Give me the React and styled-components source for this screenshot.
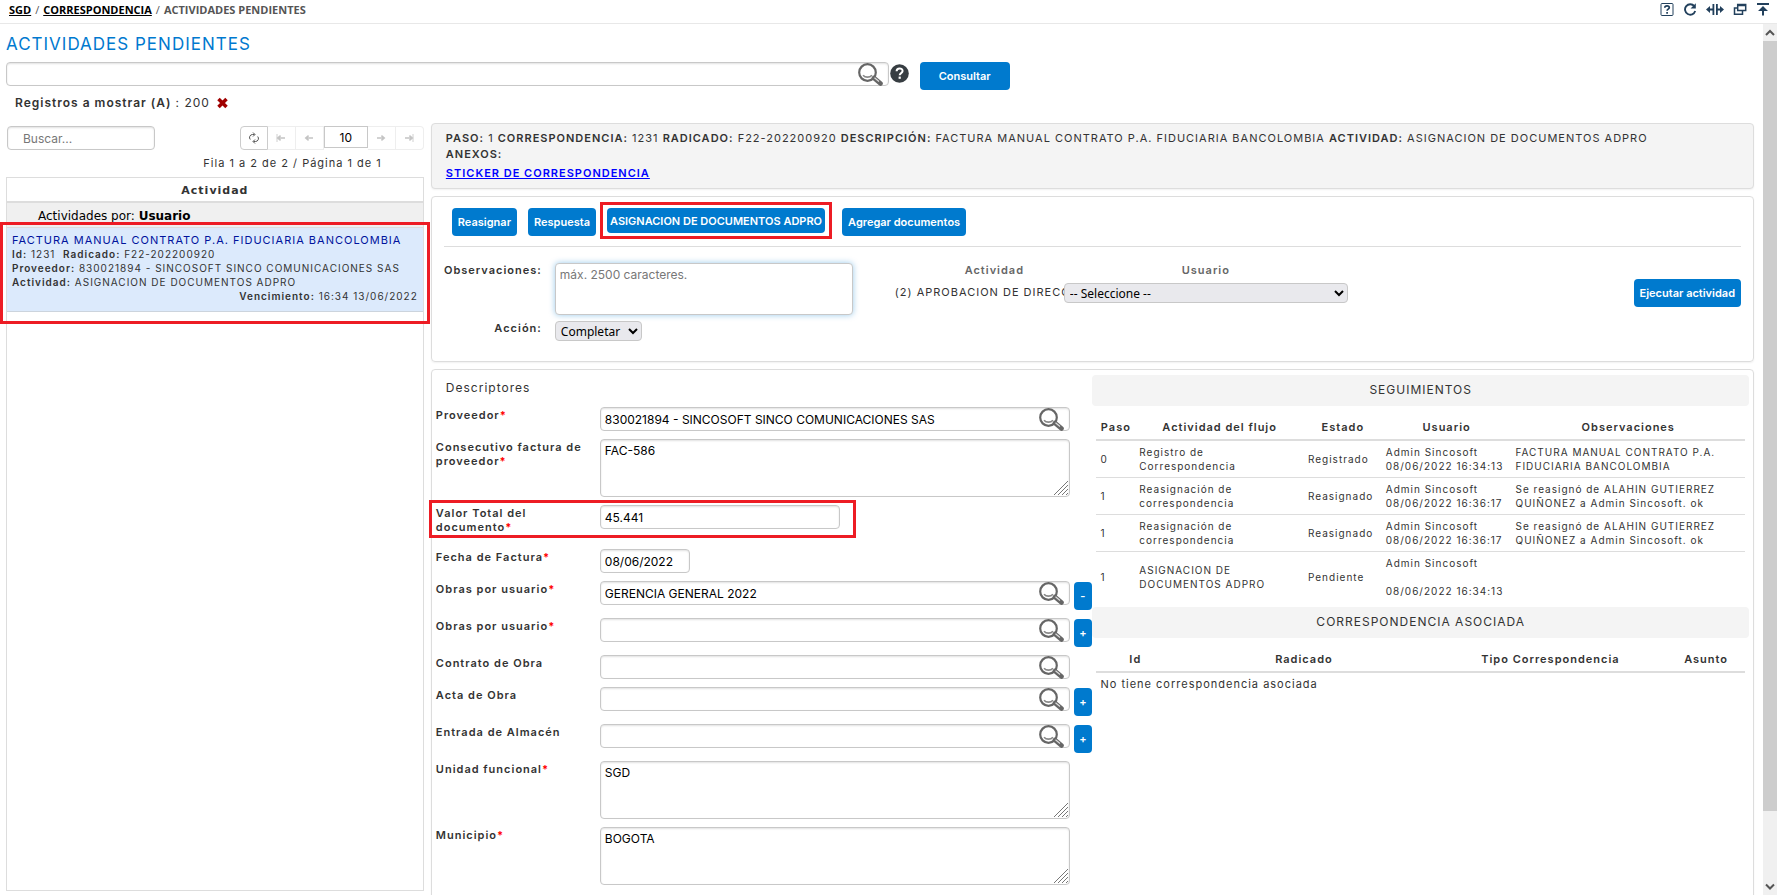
import React, { useState } from 'react';
import styled, { createGlobalStyle, css } from 'styled-components';

const GlobalStyle = createGlobalStyle`
  *, *::after {
    box-sizing: border-box;
  }
  body {
    margin: 0;
    background: #fff;
    color: #333;
    font-family: Inter, 'Liberation Sans', sans-serif;
    font-size: 11px;
    line-height: 14px;
  }
  input, textarea, button, select {
    font-family: inherit;
    margin: 0;
  }
  b, th, label {
    font-weight: 600;
  }
`;

const Page = styled.div`
  height: 100vh;
  display: flex;
  flex-direction: column;
  overflow: hidden;
`;

const TopBar = styled.header`
  height: 24px;
  flex: none;
  display: flex;
  justify-content: space-between;
  padding: 3px 7px 0 9px;
  border-bottom: 1px solid #e8e8e8;
`;

const Breadcrumb = styled.nav`
  font-family: 'Open Sans', 'Noto Sans', sans-serif;
  font-size: 11px;
  font-weight: 700;
  color: #555;

  a {
    color: #000;
  }
  span {
    font-weight: 400;
    padding: 0 4px;
  }
`;

const Tools = styled.div`
  display: flex;
  align-items: flex-start;
  gap: 9px;
`;

const IconButton = styled.button`
  display: flex;
  padding: 0;
  border: 0;
  background: none;
  color: #22405c;
`;

const Body = styled.div`
  flex: 1;
  min-height: 0;
  display: flex;
`;

const Main = styled.main`
  flex: 1;
  min-width: 0;
  overflow: hidden;
  padding: 9px 9px 0 6px;
`;

const ScrollBar = styled.div`
  width: 14px;
  flex: none;
  display: flex;
  flex-direction: column;
  justify-content: space-between;
  background: #f0f0f0;
`;

const ScrollButton = styled.button`
  height: 17px;
  padding: 0;
  border: 0;
  background: none;
  display: flex;
  align-items: center;
  justify-content: center;
`;

const ScrollTrack = styled.div`
  flex: 1;
`;

const ScrollThumb = styled.div`
  height: 92%;
  background: #cdcdcd;
`;

const Title = styled.h1`
  margin: 0 0 7px;
  font-size: 17px;
  line-height: 22px;
  font-weight: 400;
  letter-spacing: 1px;
  color: #0079cf;
`;

const SearchRow = styled.form`
  display: flex;
  align-items: flex-start;
  height: 31px;
`;

const field = css`
  border: 1px solid #c8c8c8;
  border-radius: 4px;
  background: #fff;
  box-shadow: inset 0 1px 2px rgba(0, 0, 0, 0.12);
  color: #000;
  font-size: 12px;
  line-height: 16px;
  padding: 3px 4px;

  &::placeholder {
    color: #777;
    opacity: 1;
  }
`;

const TextInput = styled.input`
  ${field}
  height: 24px;
  width: ${(p) => p.$width || '100%'};
`;

const ListSearch = styled(TextInput)`
  margin-left: 1px;
  padding-left: 15px;
`;

const TextArea = styled.textarea`
  ${field}
  display: block;
  width: 100%;
  height: 58px;
  resize: none;
`;

const SearchBox = styled.div`
  position: relative;
  width: ${(p) => p.$width || '100%'};
`;

const Lens = styled.button`
  position: absolute;
  top: 0;
  right: 5px;
  padding: 0;
  border: 0;
  background: none;
  display: flex;
`;

const HelpButton = styled(IconButton)`
  margin: 2px 11px 0 1px;
`;

const Button = styled.button`
  height: ${(p) => (p.$compact ? 25 : 28)}px;
  min-width: ${(p) => p.$width || 0}px;
  padding: 0 ${(p) => (p.$compact ? 3 : 6)}px;
  flex: none;
  border: 0;
  border-radius: 4px;
  background: #007ace;
  color: #fff;
  font-size: 11px;
  font-weight: 600;
  white-space: nowrap;
`;

const Filters = styled.div`
  display: flex;
  align-items: center;
  gap: 4px;
  height: 20px;
  padding-left: 9px;
  margin-bottom: 10px;
  font-size: 12px;
  letter-spacing: 1px;
`;

const Columns = styled.div`
  display: grid;
  grid-template-columns: minmax(0, 24fr) minmax(0, 76fr);
  gap: 7px;
`;

const ListSide = styled.section`
  padding-top: 3px;
`;

const ListTools = styled.div`
  display: flex;
  justify-content: space-between;
  align-items: flex-start;
`;

const Pager = styled.div`
  display: flex;
  align-items: flex-start;
`;

const PagerButton = styled.button`
  width: 28px;
  height: 24px;
  padding: 0;
  display: flex;
  align-items: center;
  justify-content: center;
  background: #fff;
  border: 1px solid ${(p) => (p.$on ? '#ccc' : '#eee')};
  border-left-width: ${(p) => (p.$on ? 1 : 0)}px;
  color: ${(p) => (p.$on ? '#555' : '#c4c4c4')};

  &:first-child {
    border-radius: 4px 0 0 4px;
  }
  &:last-child {
    border-radius: 0 4px 4px 0;
  }
`;

const PageSize = styled.input`
  width: 44px;
  height: 22px;
  border: 1px solid #c8c8c8;
  text-align: center;
  font-size: 12px;
  color: #000;
`;

const PageInfo = styled.div`
  padding: 6px 42px 7px 0;
  text-align: right;
  letter-spacing: 1px;
`;

const List = styled.div`
  height: 714px;
  border: 1px solid #ddd;
`;

const ListHeader = styled.div`
  padding: 6px 0 3px;
  border-bottom: 2px solid #ddd;
  text-align: center;
  font-family: 'DejaVu Sans', sans-serif;
  font-size: 11px;
  font-weight: 700;
  letter-spacing: 1px;
`;

const ListGroup = styled.div`
  padding: 6px 0 4px 31px;
  background: #f0f0f0;
  border-bottom: 1px solid #ddd;
  font-family: 'DejaVu Sans', sans-serif;
  font-size: 12px;
  color: #000;

  b {
    font-weight: 700;
  }
`;

const highlight = css`
  position: relative;

  &::after {
    content: '';
    position: absolute;
    border: 3px solid #ed1c24;
    pointer-events: none;
  }
`;

const ListItem = styled.article`
  ${highlight}
  height: 84px;
  padding: 5px 5px 0;
  background: #dceafc;
  border-bottom: 1px solid #ccd4dd;
  white-space: nowrap;

  &::after {
    inset: -6px -7px -13px -7px;
  }
  h2 {
    margin: 0;
    font-size: 11px;
    line-height: 14px;
    font-weight: 400;
    letter-spacing: 1px;
    color: #00139c;
  }
`;

const ItemLine = styled.div`
  font-size: 10px;
  text-align: ${(p) => (p.$due ? 'right' : 'left')};
  letter-spacing: 1px;
`;

const WorkSide = styled.section`
  display: flex;
  flex-direction: column;
  gap: 7px;
`;

const Panel = styled.section`
  border: 1px solid #ddd;
  border-radius: 4px;
  box-shadow: 0 1px 2px rgba(0, 0, 0, 0.06);
`;

const InfoPanel = styled(Panel)`
  height: 66px;
  padding: 6px 14px;
  background: #f4f4f4;
  line-height: 16px;
  letter-spacing: 1px;

  a {
    display: inline-block;
    margin-top: 3px;
    font-weight: 600;
    color: #00f;
  }
`;

const ActionPanel = styled(Panel)`
  height: 166px;
  padding: 11px 12px 0;
`;

const ActionButtons = styled.div`
  display: flex;
  gap: 11px;
  padding: 0 0 10px 8px;
  border-bottom: 1px solid #ddd;
`;

const Marked = styled.div`
  ${highlight}
  height: 25px;
  margin-right: 6px;

  &::after {
    inset: -6px -7px;
  }
`;

const ActionForm = styled.div`
  display: grid;
  grid-template-columns: 98px 311px 42px 169px 284px 1fr;
  padding-top: 16px;
`;

const ActionLabels = styled.div`
  display: flex;
  flex-direction: column;
  gap: 44px;
  text-align: right;
  letter-spacing: 1px;
`;

const ActionFields = styled.div`
  padding-left: 13px;
`;

const Notes = styled.textarea`
  ${field}
  display: block;
  width: 100%;
  height: 52px;
  margin-bottom: 6px;
  resize: none;
  box-shadow: 0 0 6px rgba(0, 122, 206, 0.4);
`;

const Select = styled.select`
  width: ${(p) => p.$width || '100%'};
  height: 20px;
  padding: 0 0 0 1px;
  border: 1px solid #c8c8c8;
  border-radius: 4px;
  background: #e9e9ed;
  color: #000;
  font-family: 'Noto Sans', sans-serif;
  font-size: 12px;
`;

const ActionHead = styled.div`
  height: 20px;
  padding-left: ${(p) => p.$shift || 0}px;
  text-align: center;
  font-weight: 600;
  letter-spacing: 1px;
  color: #666;
`;

const NextStep = styled.label`
  display: block;
  padding-top: 2px;
  overflow: hidden;
  white-space: nowrap;
  font-weight: 400;
  letter-spacing: 1px;
`;

const Run = styled.div`
  padding-top: 16px;
  text-align: right;
`;

const DetailPanel = styled(Panel)`
  display: grid;
  grid-template-columns: minmax(0, 1fr) minmax(0, 1fr);
  padding: 5px 4px 12px 4px;
`;

const SectionName = styled.h2`
  margin: 0;
  padding: 6px 0 12px 10px;
  font-size: 12px;
  line-height: 14px;
  font-weight: 400;
  letter-spacing: 1px;
`;

const FieldRow = styled.div`
  display: grid;
  grid-template-columns: 164px minmax(0, 470px) 22px;
  margin-bottom: 8px;
`;

const MarkedRow = styled(FieldRow)`
  ${highlight}
  min-height: 36px;

  &::after {
    inset: -5px auto 3px -7px;
    width: 427px;
  }
`;

const FieldLabel = styled.label`
  padding: 1px 14px 0 0;
  letter-spacing: 1px;

  &::after {
    content: ${(p) => (p.$required ? "'*'" : 'none')};
    color: #f00;
    font-weight: 700;
  }
`;

const RepeatButton = styled(Button)`
  justify-self: end;
  margin-top: 1px;
  width: 18px;
  padding: 0;
`;

const AreaBox = styled.div`
  position: relative;

  svg {
    position: absolute;
    right: 1px;
    bottom: 1px;
  }
`;

const SideHeading = styled.h2`
  margin: 0;
  height: 31px;
  border-radius: 4px;
  background: #f4f4f4;
  text-align: center;
  font-size: 12px;
  line-height: 30px;
  font-weight: 400;
  letter-spacing: 1px;
`;

const Table = styled.table`
  width: calc(100% - 8px);
  margin: 12px 4px ${(p) => p.$gap || 0}px;
  border-collapse: collapse;
  table-layout: fixed;
  letter-spacing: 1px;

  th {
    height: 22px;
    padding: 0 0 3px;
    border-bottom: 2px solid #ddd;
    font-size: 11px;
    white-space: nowrap;
  }
  td {
    padding: 4px 0 4px 4px;
    border-top: 1px solid #ddd;
    font-size: 10px;
    white-space: pre-line;
  }
  td[colspan] {
    font-size: 11px;
  }
`;

const LensIcon = () => (
  <svg width="28" height="24" viewBox="0 0 28 24" fill="none">
    <circle cx="11.5" cy="10.5" r="8.3" stroke="#666" strokeWidth="2.2" />
    <path d="M7 13.2c2.3 2.6 6.6 2.6 9 0" stroke="#888" strokeWidth="1.6" />
    <path d="M18 16l6.500 5.500" stroke="#666" strokeWidth="4.6" strokeLinecap="round" />
    <path d="M18.500 15.700l4.500 3.800" stroke="#ddd" strokeWidth="1.2" />
  </svg>
);

const HelpIcon = () => (
  <svg width="19" height="19" viewBox="0 0 19 19">
    <circle cx="9.5" cy="9.5" r="9.3" fill="#373d42" />
    <path d="M6.600 7.300c0-3.800 6-3.800 6-.3 0 2.200-2.900 2-2.900 4.200" fill="none" stroke="#fff" strokeWidth="2" />
    <rect x="8.6" y="12.600" width="2.200" height="2.200" fill="#fff" />
  </svg>
);

const Grip = () => (
  <svg width="16" height="16" viewBox="0 0 16 16" stroke="#777" strokeWidth="1">
    <path d="M1 15L15 1M5 15L15 5M9 15l6-6M13 15l2-2" />
  </svg>
);

const TOOL_ICONS = {
  Ayuda: (
    <svg width="14" height="13" viewBox="0 0 14 13" fill="none" stroke="currentColor">
      <rect x="1" y="0.5" width="12" height="12" rx="1" />
      <path d="M4.800 4.700c0-2.500 4.500-2.400 4.500-.1 0 1.500-2.200 1.500-2.200 3.100M7.100 9v1.700" strokeWidth="1.700" />
    </svg>
  ),
  Recargar: (
    <svg width="14" height="13" viewBox="0 0 14 13" fill="none" stroke="currentColor">
      <path d="M11.300 3.200A5.200 5.200 0 1 0 12.200 8" strokeWidth="1.900" />
      <path d="M12.800.3v5.200H7.600z" fill="currentColor" stroke="none" />
    </svg>
  ),
  Ajustar: (
    <svg width="18" height="13" viewBox="0 0 18 13" fill="currentColor">
      <path d="M6.500 1h1.800v11H6.500zM10 1h1.800v11H10zM0 6.500L4 3v2.500h2.500v2H4V10zM18 6.500L14 3v2.500h-2.200v2H14V10z" />
    </svg>
  ),
  Ventanas: (
    <svg width="14" height="13" viewBox="0 0 14 13" fill="none" stroke="currentColor" strokeWidth="1.500">
      <path d="M4.700 1.500h8v6h-8zM4.700 2.400h8M4.500 5H1.500v6.200h8V8" />
    </svg>
  ),
  Subir: (
    <svg width="14" height="13" viewBox="0 0 14 13" fill="currentColor">
      <path d="M1 0h12v2H1zM7 3l5 5H8v4.500H6V8H2z" />
    </svg>
  ),
};

const Arrow = ({ flip, bar }) => (
  <svg width="10" height="8" viewBox="0 0 12 10" fill="none" stroke="currentColor">
    <g transform={flip ? 'rotate(180 6 5)' : undefined}>
      <path d="M2 5h9M5.500 2L2 5l3.500 3" strokeWidth="2" />
      {bar && <path d="M1 0v10" />}
    </g>
  </svg>
);

const Chevron = ({ down }) => (
  <svg width="10" height="8" viewBox="0 0 10 8" fill="none" stroke="#555" strokeWidth="2">
    <path d={down ? 'M1 1.500l4 4 4-4' : 'M1 6l4-4 4 4'} />
  </svg>
);

const FIELDS = [
  { id: 'proveedor', label: 'Proveedor', required: true, type: 'search', value: '830021894 - SINCOSOFT SINCO COMUNICACIONES SAS' },
  { id: 'consecutivo', label: 'Consecutivo factura de proveedor', required: true, type: 'area', value: 'FAC-586' },
  { id: 'valor', label: 'Valor Total del documento', required: true, type: 'text', width: '240px', value: '45.441', marked: true },
  { id: 'fecha', label: 'Fecha de Factura', required: true, type: 'text', width: '90px', value: '08/06/2022' },
  { id: 'obra1', label: 'Obras por usuario', required: true, type: 'search', value: 'GERENCIA GENERAL 2022', repeat: '-' },
  { id: 'obra2', label: 'Obras por usuario', required: true, type: 'search', value: '', repeat: '+' },
  { id: 'contrato', label: 'Contrato de Obra', type: 'search', value: '' },
  { id: 'acta', label: 'Acta de Obra', type: 'search', value: '', repeat: '+' },
  { id: 'entrada', label: 'Entrada de Almacén', type: 'search', value: '', repeat: '+' },
  { id: 'unidad', label: 'Unidad funcional', required: true, type: 'area', value: 'SGD' },
  { id: 'municipio', label: 'Municipio', required: true, type: 'area', value: 'BOGOTA' },
];

const TRACKING = [
  ['0', 'Registro de\nCorrespondencia', 'Registrado', 'Admin Sincosoft\n08/06/2022 16:34:13', 'FACTURA MANUAL CONTRATO P.A.\nFIDUCIARIA BANCOLOMBIA'],
  ['1', 'Reasignación de\ncorrespondencia', 'Reasignado', 'Admin Sincosoft\n08/06/2022 16:36:17', 'Se reasignó de ALAHIN GUTIERREZ\nQUIÑONEZ a Admin Sincosoft. ok'],
  ['1', 'Reasignación de\ncorrespondencia', 'Reasignado', 'Admin Sincosoft\n08/06/2022 16:36:17', 'Se reasignó de ALAHIN GUTIERREZ\nQUIÑONEZ a Admin Sincosoft. ok'],
  ['1', 'ASIGNACION DE\nDOCUMENTOS ADPRO', 'Pendiente', 'Admin Sincosoft\n\n08/06/2022 16:34:13', ''],
];

const Field = ({ item, value, onChange }) => {
  const Row = item.marked ? MarkedRow : FieldRow;
  const common = { id: item.id, value, onChange: (e) => onChange(item.id, e.target.value) };

  return (
    <Row>
      <FieldLabel htmlFor={item.id} $required={item.required}>{item.label}</FieldLabel>
      {item.type === 'area' && (
        <AreaBox>
          <TextArea {...common} />
          <Grip />
        </AreaBox>
      )}
      {item.type === 'text' && <TextInput type="text" $width={item.width} {...common} />}
      {item.type === 'search' && (
        <SearchBox>
          <TextInput type="text" {...common} />
          <Lens type="button" aria-label={`Buscar ${item.label}`}>
            <LensIcon />
          </Lens>
        </SearchBox>
      )}
      {item.repeat && <RepeatButton type="button">{item.repeat}</RepeatButton>}
    </Row>
  );
};

const App = () => {
  const [values, setValues] = useState(Object.fromEntries(FIELDS.map((f) => [f.id, f.value])));
  const [query, setQuery] = useState('');

  const handleChange = (id, value) => setValues({ ...values, [id]: value });

  return (
    <Page>
      <GlobalStyle />
      <TopBar>
        <Breadcrumb>
          <a href="#sgd">SGD</a>
          <span>/</span>
          <a href="#correspondencia">CORRESPONDENCIA</a>
          <span>/</span>
          ACTIVIDADES PENDIENTES
        </Breadcrumb>
        <Tools>
          {Object.entries(TOOL_ICONS).map(([name, icon]) => (
            <IconButton key={name} type="button" aria-label={name}>
              {icon}
            </IconButton>
          ))}
        </Tools>
      </TopBar>

      <Body>
        <Main>
          <Title>ACTIVIDADES PENDIENTES</Title>
          <SearchRow onSubmit={(e) => e.preventDefault()}>
            <SearchBox $width="50.5%">
              <TextInput aria-label="Consulta" value={query} onChange={(e) => setQuery(e.target.value)} />
              <Lens type="button" aria-label="Buscar">
                <LensIcon />
              </Lens>
            </SearchBox>
            <HelpButton type="button" aria-label="Ayuda de consulta">
              <HelpIcon />
            </HelpButton>
            <Button type="submit" $width={90}>Consultar</Button>
          </SearchRow>
          <Filters>
            <b>Registros a mostrar (A)</b> : 200
            <IconButton type="button" aria-label="Quitar filtro">
              <svg width="16" height="12" viewBox="0 0 16 12" stroke="#a00000" strokeWidth="3.500">
                <path d="M4.500 2l8 8M12.500 2l-8 8" />
              </svg>
            </IconButton>
          </Filters>

          <Columns>
            <ListSide>
              <ListTools>
                <ListSearch $width="148px" placeholder="Buscar..." aria-label="Buscar actividad" />
                <Pager>
                  <PagerButton $on aria-label="Actualizar">
                    <svg width="12" height="12" viewBox="0 0 12 12" fill="none" stroke="currentColor">
                      <path d="M6.500 2.500H4.500a3 3 0 0 0-2.200 5M5.500 9.500h2a3 3 0 0 0 2.200-5M5 .5l2 2-2 2M7 7.500l-2 2 2 2" />
                    </svg>
                  </PagerButton>
                  <PagerButton aria-label="Primera"><Arrow bar /></PagerButton>
                  <PagerButton aria-label="Anterior"><Arrow /></PagerButton>
                  <PageSize aria-label="Filas por página" defaultValue="10" />
                  <PagerButton aria-label="Siguiente"><Arrow flip /></PagerButton>
                  <PagerButton aria-label="Última"><Arrow flip bar /></PagerButton>
                </Pager>
              </ListTools>
              <PageInfo>Fila 1 a 2 de 2 / Página 1 de 1</PageInfo>
              <List>
                <ListHeader>Actividad</ListHeader>
                <ListGroup>Actividades por: <b>Usuario</b></ListGroup>
                <ListItem>
                  <h2>FACTURA MANUAL CONTRATO P.A. FIDUCIARIA BANCOLOMBIA</h2>
                  <ItemLine><b>Id:</b> 1231 &nbsp;<b>Radicado:</b> F22-202200920</ItemLine>
                  <ItemLine><b>Proveedor:</b> 830021894 - SINCOSOFT SINCO COMUNICACIONES SAS</ItemLine>
                  <ItemLine><b>Actividad:</b> ASIGNACION DE DOCUMENTOS ADPRO</ItemLine>
                  <ItemLine $due><b>Vencimiento:</b> 16:34 13/06/2022</ItemLine>
                </ListItem>
              </List>
            </ListSide>

            <WorkSide>
              <InfoPanel>
                <div>
                  <b>PASO:</b> 1 <b>CORRESPONDENCIA:</b> 1231 <b>RADICADO:</b> F22-202200920 <b>DESCRIPCIÓN:</b> FACTURA
                  MANUAL CONTRATO P.A. FIDUCIARIA BANCOLOMBIA <b>ACTIVIDAD:</b> ASIGNACION DE DOCUMENTOS ADPRO
                </div>
                <div><b>ANEXOS:</b></div>
                <a href="#sticker">STICKER DE CORRESPONDENCIA</a>
              </InfoPanel>

              <ActionPanel>
                <ActionButtons>
                  <Button type="button">Reasignar</Button>
                  <Button type="button">Respuesta</Button>
                  <Marked>
                    <Button type="button" $compact>ASIGNACION DE DOCUMENTOS ADPRO</Button>
                  </Marked>
                  <Button type="button">Agregar documentos</Button>
                </ActionButtons>
                <ActionForm>
                  <ActionLabels>
                    <label htmlFor="observaciones">Observaciones:</label>
                    <label htmlFor="accion">Acción:</label>
                  </ActionLabels>
                  <ActionFields>
                    <Notes id="observaciones" placeholder="máx. 2500 caracteres." />
                    <Select id="accion" $width="87px">
                      <option>Completar</option>
                    </Select>
                  </ActionFields>
                  <span />
                  <div>
                    <ActionHead $shift={30}>Actividad</ActionHead>
                    <NextStep htmlFor="usuario">(2) APROBACION DE DIRECCION</NextStep>
                  </div>
                  <div>
                    <ActionHead>Usuario</ActionHead>
                    <Select id="usuario">
                      <option>-- Seleccione --</option>
                    </Select>
                  </div>
                  <Run>
                    <Button type="button">Ejecutar actividad</Button>
                  </Run>
                </ActionForm>
              </ActionPanel>

              <DetailPanel>
                <div>
                  <SectionName>Descriptores</SectionName>
                  {FIELDS.map((f) => (
                    <Field key={f.id} item={f} value={values[f.id]} onChange={handleChange} />
                  ))}
                </div>
                <div>
                  <SideHeading>SEGUIMIENTOS</SideHeading>
                  <Table $gap={5}>
                    <colgroup>
                      <col width="6%" />
                      <col width="26%" />
                      <col width="12%" />
                      <col width="20%" />
                      <col width="36%" />
                    </colgroup>
                    <thead>
                      <tr>
                        <th>Paso</th>
                        <th>Actividad del flujo</th>
                        <th>Estado</th>
                        <th>Usuario</th>
                        <th>Observaciones</th>
                      </tr>
                    </thead>
                    <tbody>
                      {TRACKING.map((row, i) => (
                        <tr key={i}>
                          {row.map((cell, j) => (
                            <td key={j}>{cell}</td>
                          ))}
                        </tr>
                      ))}
                    </tbody>
                  </Table>
                  <SideHeading>CORRESPONDENCIA ASOCIADA</SideHeading>
                  <Table>
                    <colgroup>
                      <col width="12%" />
                      <col width="40%" />
                      <col width="36%" />
                      <col width="12%" />
                    </colgroup>
                    <thead>
                      <tr>
                        <th>Id</th>
                        <th>Radicado</th>
                        <th>Tipo Correspondencia</th>
                        <th>Asunto</th>
                      </tr>
                    </thead>
                    <tbody>
                      <tr>
                        <td colSpan={4}>No tiene correspondencia asociada</td>
                      </tr>
                    </tbody>
                  </Table>
                </div>
              </DetailPanel>
            </WorkSide>
          </Columns>
        </Main>
        <ScrollBar>
          <ScrollButton aria-label="Subir"><Chevron /></ScrollButton>
          <ScrollTrack><ScrollThumb /></ScrollTrack>
          <ScrollButton aria-label="Bajar"><Chevron down /></ScrollButton>
        </ScrollBar>
      </Body>
    </Page>
  );
};

export default App;
